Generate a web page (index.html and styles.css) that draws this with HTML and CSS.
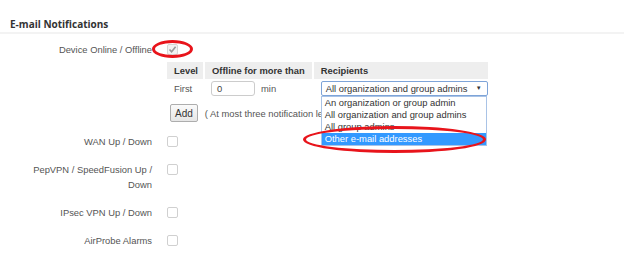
FILE: index.html
```html
<!DOCTYPE html>
<html lang="en">
<head>
  <meta charset="UTF-8" />
  <title>E-mail Notifications</title>
  <link rel="stylesheet" href="styles.css">
</head>
<body>
  <h2 class="section-title">E-mail Notifications</h2>

  <div class="form">
    <div class="row">
      <label class="row-label">Device Online / Offline</label>
      <div class="row-field">
        <span class="check checked">
          <svg viewBox="0 0 11 11" width="11" height="11"><polyline points="2.5,5.5 4.6,7.8 8.6,2.8" fill="none" stroke="#9a9a9a" stroke-width="1.6"/></svg>
        </span>
      </div>
    </div>

    <table class="levels">
      <tr>
        <th class="c-level">Level</th>
        <th class="c-offline">Offline for more than</th>
        <th class="c-recip">Recipients</th>
      </tr>
      <tr>
        <td class="c-level">First</td>
        <td class="c-offline"><span class="num-input">0</span><span class="unit">min</span></td>
        <td class="c-recip">
          <div class="select-wrap">
            <div class="select">All organization and group admins <span class="arrow">&#9660;</span></div>
            <ul class="dropdown">
              <li>An organization or group admin</li>
              <li>All organization and group admins</li>
              <li>All group admins</li>
              <li class="active">Other e-mail addresses</li>
            </ul>
          </div>
        </td>
      </tr>
      <tr>
        <td colspan="3" class="add-cell"><button class="btn">Add</button><span class="note">( At most three notification levels can be added )</span></td>
      </tr>
    </table>

    <div class="row">
      <label class="row-label">WAN Up / Down</label>
      <div class="row-field"><span class="check"></span></div>
    </div>
    <div class="row">
      <label class="row-label">PepVPN / SpeedFusion Up / Down</label>
      <div class="row-field"><span class="check"></span></div>
    </div>
    <div class="row">
      <label class="row-label">IPsec VPN Up / Down</label>
      <div class="row-field"><span class="check"></span></div>
    </div>
    <div class="row">
      <label class="row-label">AirProbe Alarms</label>
      <div class="row-field"><span class="check"></span></div>
    </div>
  </div>

  <!-- annotation marks -->
  <span class="mark mark-check"></span>
  <span class="mark mark-option"></span>
</body>
</html>
```

FILE: styles.css
```css
body { margin: 0; font-family: "Liberation Sans", Arial, sans-serif; font-size: 9.4px; color: #555; background: #fff; position: relative; }
.section-title { margin: 0; padding: 17px 0 1px 10px; font-family: "Open Sans", sans-serif; font-size: 10px; font-weight: 700; line-height: 14px; color: #333; border-bottom: 2px solid #f3f3f3; }

.form { padding-top: 8px; }
.row { display: grid; grid-template-columns: 140px 1fr; column-gap: 15px; padding-left: 12px; line-height: 15px; margin-bottom: 13px; }
.row-label { text-align: right; }
.row-field { padding-top: 2px; }
.check { display: block; width: 9px; height: 9px; border: 1px solid #d0d0d0; border-radius: 2px; background: #fff; }
.check.checked { background: #f2f2f2; border-color: #d6d6d6; }
.check svg { display: block; margin: -1px; }

.levels { margin: -8px 0 12px 167px; border-collapse: collapse; color: #333; line-height: 13px; white-space: nowrap; }
.levels th { background: #eee; text-align: left; font-weight: 700; line-height: 17px; height: 17px; padding: 0 7px; }
.levels th + th { border-left: 2px solid #fff; }
.levels td { padding: 1px 7px 0; height: 17px; color: #555; }
.levels .c-level { padding-right: 5px; }
.c-offline { width: 91px; }
.c-recip { width: 160px; }
.levels td.c-recip { padding: 1px 0 0 8px; }
.num-input { display: inline-block; width: 37px; height: 13px; line-height: 13px; padding-left: 5px; border: 1px solid #ccc; border-radius: 3px; color: #444; vertical-align: middle; }
.unit { margin-left: 6px; vertical-align: middle; }

.select-wrap { position: relative; }
.select { height: 13px; line-height: 13px; border: 1px solid #7ea4d8; border-radius: 2px; padding: 0 4px; color: #333; position: relative; }
.arrow { position: absolute; right: 5px; top: 0; font-size: 6px; color: #333; }
.dropdown { position: absolute; top: 15px; left: 0; width: 164px; margin: 0; padding: 0; list-style: none; background: #fff; border: 1px solid #a9c3e6; color: #333; z-index: 2; }
.dropdown li { line-height: 12px; height: 12px; padding-left: 3px; }
.dropdown li.active { background: #3399ff; color: #fff; }

.levels td.add-cell { padding: 7px 0 0 3px; }
.btn { font: inherit; font-size: 10px; color: #333; height: 18px; padding: 0 4px; border: 1px solid #adadad; border-radius: 2px; background: linear-gradient(#fafafa, #e6e6e6); vertical-align: middle; }
.note { margin-left: 7px; vertical-align: middle; }

.mark { position: absolute; border: 3px solid #e8141b; border-radius: 50%; z-index: 3; }
.mark-check { left: 152px; top: 40px; width: 35px; height: 12px; }
.mark-option { left: 303px; top: 126px; width: 177px; height: 21px; }
```
